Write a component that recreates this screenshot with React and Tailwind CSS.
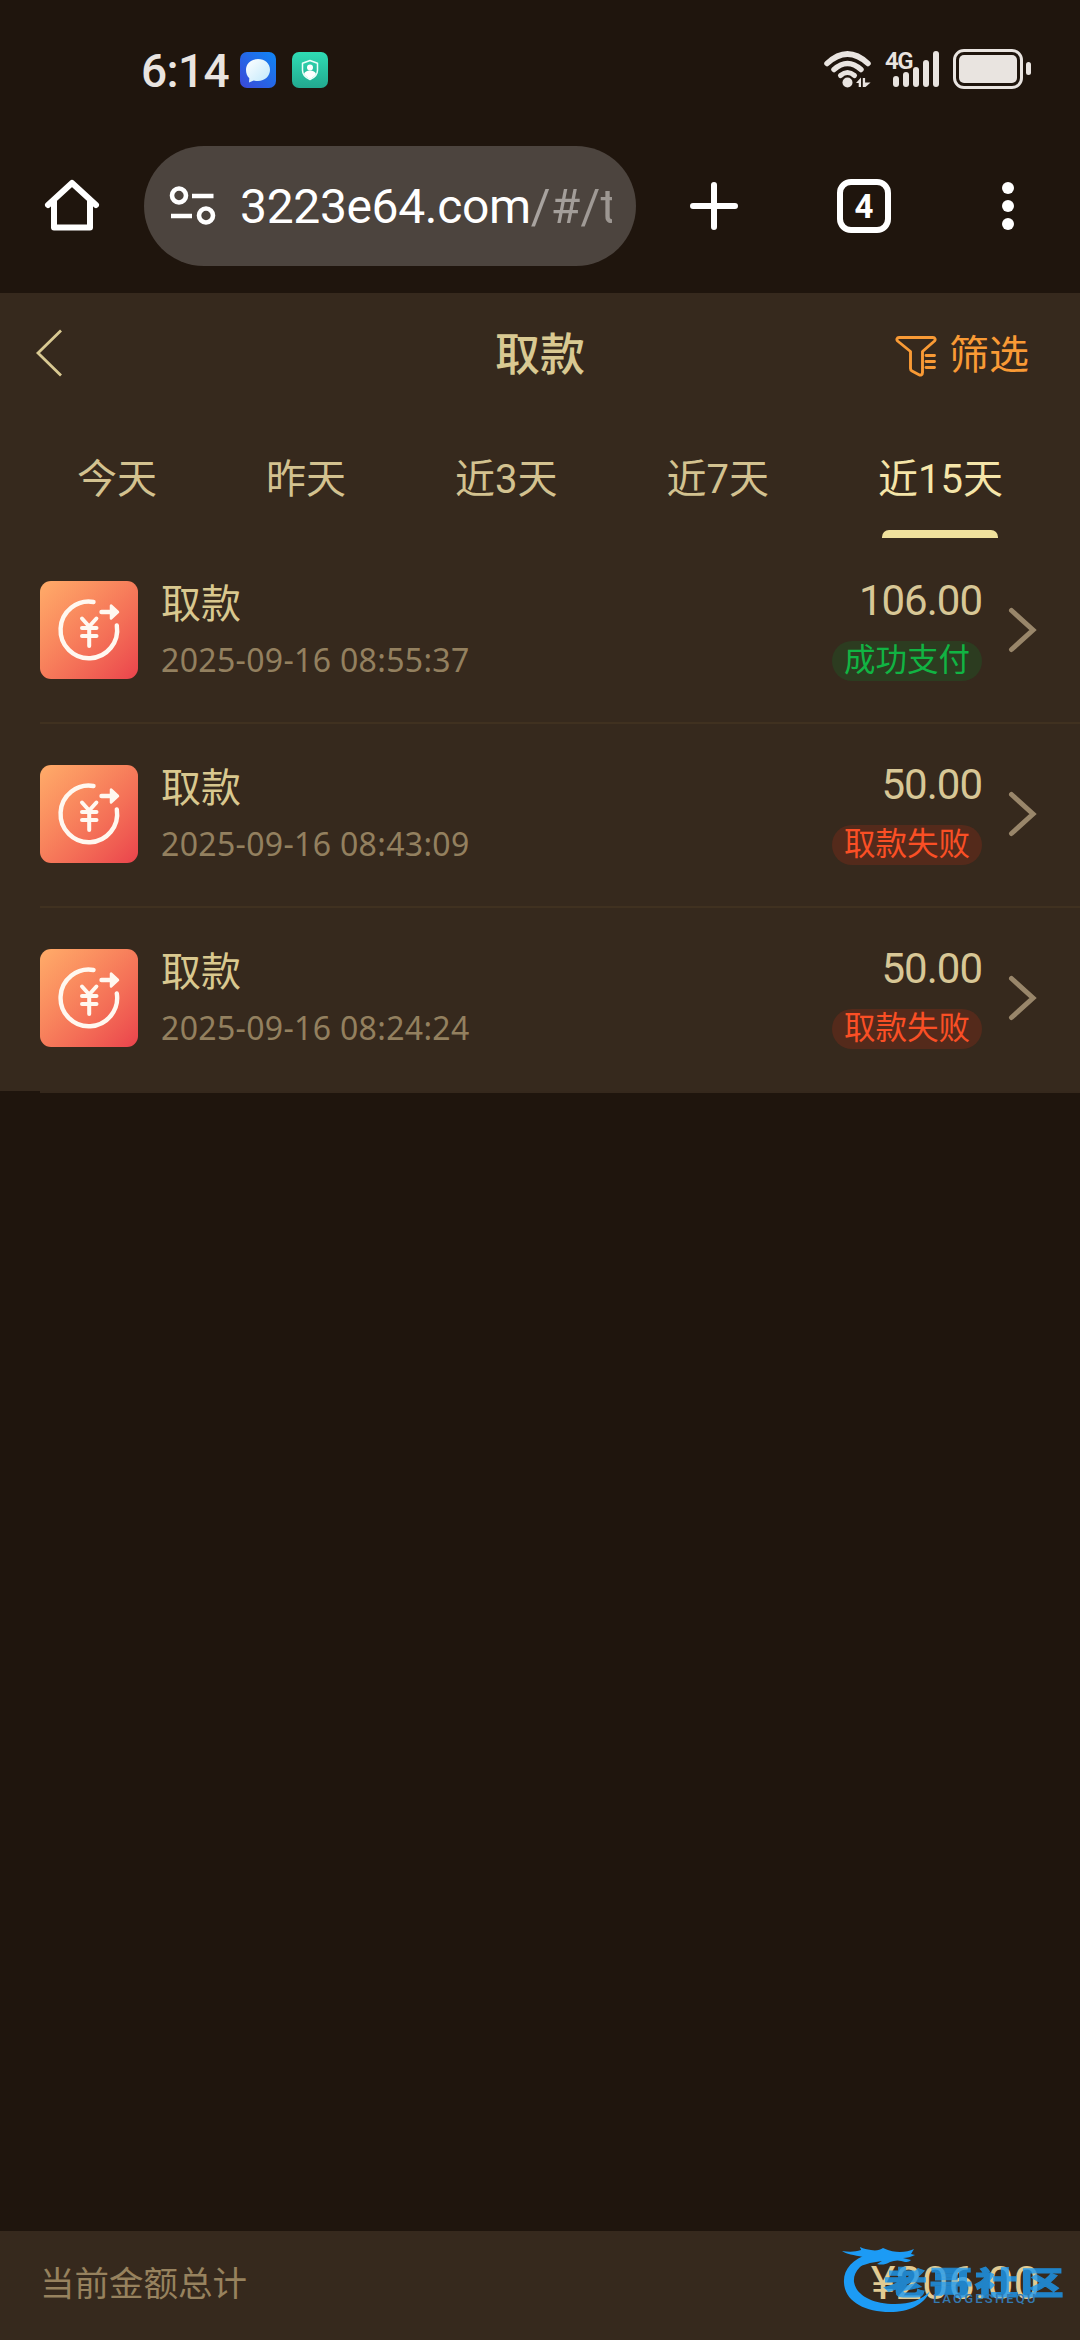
import { useState } from "react";

const tabs = ["今天", "昨天", "近3天", "近7天", "近15天"];

const records = [
  { id: 1, time: "2025-09-16 08:55:37", amount: "106.00", success: true },
  { id: 2, time: "2025-09-16 08:43:09", amount: "50.00", success: false },
  { id: 3, time: "2025-09-16 08:24:24", amount: "50.00", success: false },
];

function StatusBar() {
  return (
    <div className="flex h-[138px] items-start pt-[48px] pl-[141px] pr-[49px] text-[#e9e4e0]">
      <div className="mt-[-3px] w-[99px] text-[46px] leading-[52px] font-medium tracking-[-0.6px]">
        6:14
      </div>

      <svg className="mt-1 h-9 w-9" viewBox="0 0 36 36">
        <defs>
          <linearGradient id="chat" x1="0" y1="1" x2="1" y2="0">
            <stop offset="0" stopColor="#3b48d8" />
            <stop offset="1" stopColor="#0f86f4" />
          </linearGradient>
          <linearGradient id="bubble" x1="0" y1="0" x2="1" y2="1">
            <stop offset="0" stopColor="#ffffff" />
            <stop offset="1" stopColor="#bfe8fb" />
          </linearGradient>
        </defs>
        <rect width="36" height="36" rx="7" fill="url(#chat)" />
        <path
          d="M18 7c7 0 12 4.600 12 10.800S25 29 18 29c-1.500 0-3-.1-4.300-.6L9 30.500l.3-4.300C7 24.200 6 21.200 6 17.800 6 11.600 11 7 18 7z"
          fill="url(#bubble)"
        />
      </svg>

      <svg className="mt-1 ml-4 h-9 w-9" viewBox="0 0 36 36">
        <defs>
          <linearGradient id="shield" x1="0" y1="0" x2="0" y2="1">
            <stop offset="0" stopColor="#2fdcb4" />
            <stop offset="1" stopColor="#22a98f" />
          </linearGradient>
        </defs>
        <rect width="36" height="36" rx="7" fill="url(#shield)" />
        <path
          d="M18 8.500l7.500 2.700v7c0 4.500-3.200 7.500-7.500 9.300-4.300-1.800-7.500-4.800-7.500-9.300v-7z"
          fill="none"
          stroke="#e9fff9"
          strokeWidth="1.500"
          strokeLinejoin="round"
        />
        <circle cx="18" cy="15.500" r="3" fill="#fff" />
        <path d="M12 22c.5-2.300 3-3.500 6-3.500s5.500 1.200 6 3.500c-1.200 2.200-3.300 3.700-6 5-2.700-1.300-4.800-2.800-6-5z" fill="#fff" />
      </svg>

      <div className="grow" />

      <svg className="h-[42px] w-[50px]" viewBox="0 0 50 42" fill="none" stroke="currentColor" strokeWidth="5.500" strokeLinecap="round">
        <path d="M4 15.500Q24.500 -3.500 45 15.500" />
        <path d="M11 21.500Q24.500 9.500 38 21.500" />
        <path d="M17.500 27.500Q24.500 21.500 31.500 27.500" strokeWidth="5" />
        <circle cx="24.500" cy="34.500" r="5" fill="currentColor" stroke="none" />
        <path d="M33 35l5-5.500V39h-2.300v-4zM39.800 39V30h2.300v4.500h5.500L42.500 39z" fill="currentColor" stroke="none" />
      </svg>

      <div className="relative ml-[12px] h-[42px] w-[56px]">
        <span className="absolute top-[1px] left-0 text-[24px] leading-[24px] font-semibold tracking-[-1.500px]">
          4G
        </span>
        <div className="flex h-[39px] items-end gap-[4px] pl-[8px]">
          <i className="h-[11px] w-[6px] rounded-full bg-current" />
          <i className="h-[15px] w-[6px] rounded-full bg-current" />
          <i className="h-[20px] w-[6px] rounded-full bg-current" />
          <i className="h-[27px] w-[6px] rounded-full bg-current" />
          <i className="h-[36px] w-[6px] rounded-full bg-current" />
        </div>
      </div>

      <div className="ml-[12px] flex items-center gap-[3px]">
        <div className="mt-[1px] h-[40px] w-[70px] rounded-[11px] border-[3px] border-current p-[3px]">
          <div className="h-full rounded-[5px] bg-current" />
        </div>
        <div className="h-[13px] w-[5px] rounded-full bg-current" />
      </div>
    </div>
  );
}

function BrowserBar() {
  return (
    <div className="flex h-[155px] items-start pt-[8px] text-white">
      <svg className="mt-[30px] ml-[42px] h-[60px] w-[60px]" viewBox="0 0 60 60" fill="none" stroke="currentColor" strokeWidth="6" strokeLinecap="round">
        <path d="M6 29L30 7l24 22" strokeLinejoin="round" />
        <path d="M12 25v26.500h36V25" strokeLinejoin="round" />
      </svg>

      <div className="ml-[42px] flex h-[120px] w-[492px] items-center rounded-full bg-[#4c443e] pl-[24px]">
        <svg className="h-[48px] w-[48px]" viewBox="0 0 48 48" fill="none" stroke="currentColor" strokeWidth="4.600">
          <circle cx="11" cy="13.500" r="7" />
          <path d="M24 14h21.500M3 34h21" />
          <circle cx="38" cy="33.500" r="7" />
        </svg>
        <div className="mt-[2px] ml-[24px] w-[372px] overflow-hidden text-[48px] leading-[60px] tracking-[-0.350px] whitespace-nowrap">
          3223e64.com<span className="bg-linear-to-r from-[#aaa5a1] to-[#9b9590] bg-clip-text tracking-[0.200px] text-transparent">/#/t</span>
        </div>
      </div>

      <svg className="mt-[36px] ml-[54px] h-[48px] w-[48px]" viewBox="0 0 48 48" stroke="currentColor" strokeWidth="6" strokeLinecap="round">
        <path d="M24 3v42M3 24h42" />
      </svg>

      <div className="mt-[33px] ml-[99px] flex h-[54px] w-[54px] items-center justify-center rounded-[14px] border-[6px] border-current text-[33px] leading-none font-bold">
        4
      </div>

      <div className="mt-[36px] ml-[111px] flex flex-col gap-[6px]">
        <div className="h-3 w-3 rounded-full bg-current" />
        <div className="h-3 w-3 rounded-full bg-current" />
        <div className="h-3 w-3 rounded-full bg-current" />
      </div>
    </div>
  );
}

function WithdrawIcon() {
  return (
    <div className="h-[98px] w-[98px] shrink-0 rounded-[11px] bg-linear-to-br from-[#ffac69] to-[#ea424c]">
      <svg viewBox="0 0 98 98" fill="none" stroke="#fff8f0" strokeWidth="4.400" strokeLinecap="round" strokeLinejoin="round">
        <path d="M53.500 21A28.300 28.300 0 1 0 76.800 44.500" />
        <path d="M61.500 31H71" />
        <path d="M71 24.500v13l7-6.500z" fill="#fff8f0" strokeWidth="2.500" />
        <path d="M42 37.500l7.200 8 7.200-8M42 47h14.500M42 55h14.500M49.200 46v19" strokeWidth="4" />
      </svg>
    </div>
  );
}

function RecordRow({ item }) {
  return (
    <div className="relative flex h-[184px] pt-[41px] pl-[40px] last:h-[183px]">
      <WithdrawIcon />

      <div className="ml-[23px] grow">
        <div className="mt-[2px] text-[40px] leading-[44px] text-[#d9c88f]">取款</div>
        <div className="mt-[15px] font-['Noto_Sans',sans-serif] text-[32px] leading-[36px] tracking-[0.330px] text-[#93805f]">
          {item.time}
        </div>
      </div>

      <div className="flex flex-col items-end">
        <div className="mt-[-3px] text-[42px] leading-[46px] tracking-[-1px] text-[#d8c796]">
          {item.amount}
        </div>
        <div
          className={`mt-[17px] h-[40px] w-[150px] rounded-full text-center text-[31.500px] leading-[40px] ${
            item.success
              ? "bg-[#2c3c20] text-[#11b443]"
              : "bg-[#542a1b] text-[#fa4f25]"
          }`}
        >
          {item.success ? "成功支付" : "取款失败"}
        </div>
      </div>

      <svg className="mt-[25px] mr-[42px] ml-[24px] h-[48px] w-[32px]" viewBox="0 0 32 48" fill="none" stroke="#99866a" strokeWidth="5" strokeLinecap="round">
        <path d="M5.500 4.500L27 24 5.500 43.500" />
      </svg>

      <div
        className={`absolute right-0 left-[40px] h-[2px] ${
          item.id === records.length ? "-bottom-[2px] bg-[#35281c]" : "bottom-0 bg-[#403120]"
        }`}
      />
    </div>
  );
}

function Watermark() {
  return (
    <div className="absolute top-[12px] right-[14px] h-[72px] w-[224px] text-[#1c9bf5]">
      <svg className="h-[72px] w-[92px]" viewBox="0 0 92 72" fill="currentColor">
        <path d="M27 11C10 16 1 27 2 40c1 18 20 29 46 29 19 0 34-7 40-21-8 9-20 13-35 13C30 61 14 52 12 39 11 29 19 19 35 16z" />
        <path d="M0 8c7 1 13 1 19-1 0-1-1-2-1-3 4 2 7 2 11 3 5 1 9 0 12-2 7 3 12 4 17 4 5 0 10-1 14-3l-3 5 4 1c-4 2-8 3-12 3l8 2c-2 2-4 2-6 2-5-2-10-2-15 0-5 3-9 3-13 2l5-3-12 2c-3 1-6 2-10 3l6-6-7 3 4-6C12 12 4 11 0 8z" />
      </svg>
      <div className="absolute top-[17px] left-[42px] font-['Noto_Sans_CJK_SC',sans-serif] text-[43px] leading-[41px] font-black tracking-[2.500px] whitespace-nowrap opacity-80 [-webkit-text-stroke:1.500px_#1c9bf5]">
        <span className="inline-block origin-center scale-y-[0.720]">老哥社区</span>
      </div>
      <div className="absolute top-[49px] left-[91px] text-[13px] leading-[14px] font-medium tracking-[2.200px] text-[#3478b0]">
        LAOGESHEQU
      </div>
    </div>
  );
}

export default function App() {
  const [active, setActive] = useState(4);

  return (
    <div className="flex h-[2340px] w-[1080px] flex-col overflow-hidden bg-[#1f150d] font-['Roboto','Noto_Sans_CJK_SC',sans-serif]">
      <StatusBar />
      <BrowserBar />

      <div className="bg-[#36291d]">
        <div className="flex h-[123px] items-center">
          <button className="w-[330px] pl-[34px]">
            <svg className="mb-[4px] h-[48px] w-[30px]" viewBox="0 0 30 48" fill="none" stroke="#d9c992" strokeWidth="2.800">
              <path d="M27 1.500L4 24l23 22.500" />
            </svg>
          </button>
          <h1 className="mt-[2px] grow text-center text-[45px] leading-[60px] font-medium text-[#d9c992]">
            取款
          </h1>
          <div className="flex w-[330px] items-center pl-[145px] text-[#f99a35]">
            <svg className="mt-[3px] h-[42px] w-[42px]" viewBox="0 0 42 42" fill="none" stroke="currentColor" strokeWidth="2.900" strokeLinecap="round" strokeLinejoin="round">
              <path d="M4 2.500h34c2 0 2.800 2 1.500 3.500L27.500 16.500V37.500c0 2.500-2 3-3.500 2.200l-7-3.700c-1-.5-1.500-1.300-1.500-2.500v-17L2.600 6C1.200 4.500 2 2.500 4 2.500z" />
              <path d="M31 20.500h8.500M31 26.500h8.500M31 32.500h8.500" />
            </svg>
            <span className="mt-[3px] ml-[12px] text-[40px] leading-[50px]">筛选</span>
          </div>
        </div>

        <div className="flex h-[124px] gap-[109px] pt-[39px] pl-[77px]">
          {tabs.map((tab, i) => (
            <button
              key={tab}
              onClick={() => setActive(i)}
              className={`relative flex h-[83px] items-start text-[40px] leading-[50px] whitespace-nowrap ${
                i === active ? "text-[#f5e5a9]" : "text-[#d3c290]"
              }`}
            >
              {tab}
              {i === active && (
                <span className="absolute bottom-0 left-1/2 h-[8px] w-[116px] -translate-x-1/2 rounded-t-[7px] bg-[#f0e19d]" />
              )}
            </button>
          ))}
        </div>

        <div>
          {records.map((item) => (
            <RecordRow key={item.id} item={item} />
          ))}
        </div>
      </div>

      <div className="relative mt-auto flex h-[109px] items-center justify-between bg-[#36291d] pr-[40px] pl-[40px]">
        <span className="mt-[-4px] text-[34.500px] leading-[48px] text-[#97825e]">
          当前金额总计
        </span>
        <span className="mt-[-5px] text-[47px] leading-[56px] text-[#e2cb93]">
          ¥206.00
        </span>
        <Watermark />
      </div>
    </div>
  );
}
